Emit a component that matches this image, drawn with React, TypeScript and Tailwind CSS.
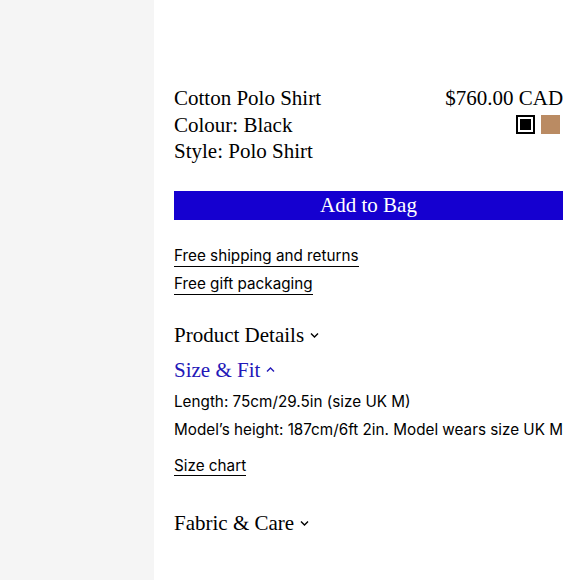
const serif = { fontFamily: '"Liberation Serif", serif' };

function Chevron({ up = false }: { up?: boolean }) {
  return (
    <svg width="11" height="10" viewBox="0 0 11 10" className="ml-[5px] inline-block">
      <path
        d={up ? 'M2 6.5 L5.5 3 L9 6.5' : 'M2 3.5 L5.5 7 L9 3.5'}
        fill="none"
        stroke="currentColor"
        strokeWidth="1.4"
      />
    </svg>
  );
}

export default function App() {
  return (
    <div className="flex h-[580px] w-[580px] overflow-hidden bg-white text-black">
      <div className="w-[154px] shrink-0 bg-[#f5f5f5]" />
      <div className="flex-1 pl-5 pr-[18px] pt-[85px]" style={{ fontFamily: 'Inter, "Liberation Sans", sans-serif' }}>
        <div className="flex justify-between text-[21px] leading-[26.5px]" style={serif}>
          <div>
            <div>Cotton Polo Shirt</div>
            <div>Colour: Black</div>
            <div>Style: Polo Shirt</div>
          </div>
          <div className="flex flex-col items-end">
            <div>$760.00 CAD</div>
            <div className="mr-[3px] mt-[3px] flex gap-[6px]">
              <div className="h-[19px] w-[19px] border-2 border-black p-[2px]">
                <div className="h-full w-full bg-black" />
              </div>
              <div className="h-[19px] w-[19px] bg-[#ba8b63]" />
            </div>
          </div>
        </div>

        <button
          className="mt-[26px] block h-[29px] w-full bg-[#1500d0] text-[21px] leading-[29px] text-white"
          style={serif}
        >
          Add to Bag
        </button>

        <div className="mt-[26px] flex flex-col items-start gap-[7px] text-[15.25px] leading-[20px]">
          <span className="border-b border-black">Free shipping and returns</span>
          <span className="border-b border-black">Free gift packaging</span>
        </div>

        <div className="mt-[27px] flex items-center text-[21px] leading-[26px]" style={serif}>
          Product Details
          <Chevron />
        </div>
        <div className="mt-[9px] flex items-center text-[21px] leading-[26px] text-[#2318b8]" style={serif}>
          Size &amp; Fit
          <Chevron up />
        </div>
        <div className="mt-[5px] whitespace-nowrap text-[15.25px] leading-[28px]">
          <div>Length: 75cm/29.5in (size UK M)</div>
          <div>Model’s height: 187cm/6ft 2in. Model wears size UK M</div>
        </div>
        <div className="mt-[9px]">
          <span className="border-b border-black text-[15.25px] leading-[20px]">Size chart</span>
        </div>
        <div className="mt-[33px] flex items-center text-[21px] leading-[26px]" style={serif}>
          Fabric &amp; Care
          <Chevron />
        </div>
      </div>
    </div>
  );
}
